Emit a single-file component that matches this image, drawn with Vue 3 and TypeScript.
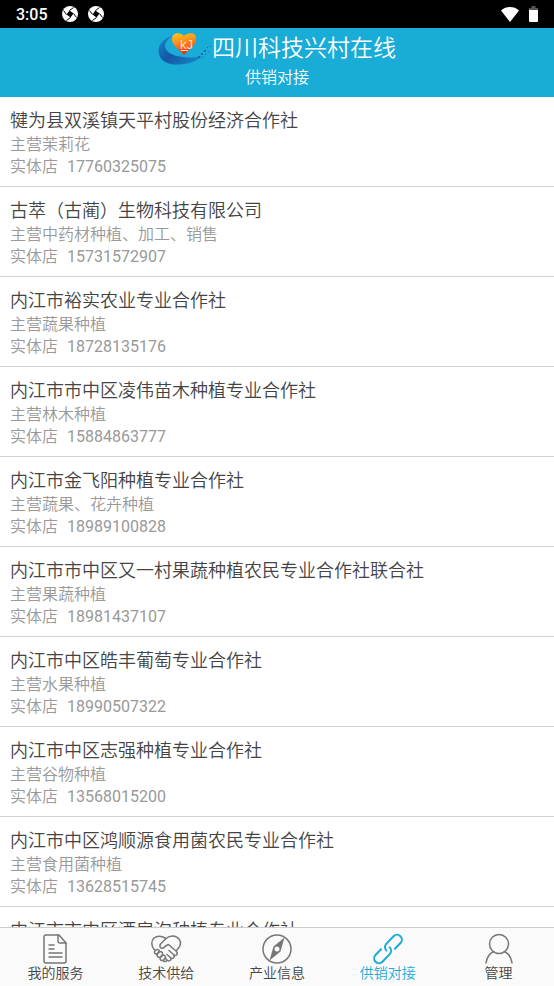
<script setup lang="ts">
import { ref } from 'vue'

interface Supplier {
  name: string
  business: string
  kind: string
  phone: string
}

interface Tab {
  id: string
  label: string
}

const suppliers: Supplier[] = [
  { name: '犍为县双溪镇天平村股份经济合作社', business: '主营茉莉花', kind: '实体店', phone: '17760325075' },
  { name: '古萃（古蔺）生物科技有限公司', business: '主营中药材种植、加工、销售', kind: '实体店', phone: '15731572907' },
  { name: '内江市裕实农业专业合作社', business: '主营蔬果种植', kind: '实体店', phone: '18728135176' },
  { name: '内江市市中区凌伟苗木种植专业合作社', business: '主营林木种植', kind: '实体店', phone: '15884863777' },
  { name: '内江市金飞阳种植专业合作社', business: '主营蔬果、花卉种植', kind: '实体店', phone: '18989100828' },
  { name: '内江市市中区又一村果蔬种植农民专业合作社联合社', business: '主营果蔬种植', kind: '实体店', phone: '18981437107' },
  { name: '内江市中区皓丰葡萄专业合作社', business: '主营水果种植', kind: '实体店', phone: '18990507322' },
  { name: '内江市中区志强种植专业合作社', business: '主营谷物种植', kind: '实体店', phone: '13568015200' },
  { name: '内江市中区鸿顺源食用菌农民专业合作社', business: '主营食用菌种植', kind: '实体店', phone: '13628515745' },
  { name: '内江市市中区酒房沟种植专业合作社', business: '', kind: '', phone: '' },
]

const tabs: Tab[] = [
  { id: 'service', label: '我的服务' },
  { id: 'tech', label: '技术供给' },
  { id: 'info', label: '产业信息' },
  { id: 'trade', label: '供销对接' },
  { id: 'manage', label: '管理' },
]

const active = ref('trade')
</script>

<template>
  <div class="screen">
    <div class="status">
      <span class="clock">3:05</span>
      <svg v-for="n in 2" :key="n" class="notice" viewBox="0 0 16 16" aria-hidden="true">
        <circle cx="8" cy="8" r="8" fill="#fff" />
        <path d="M7.500 4.500 11.500 7.500 8.500 11.500 4.500 8.500Z" fill="#000" />
        <path d="M7.500 4.500 11.500 1.500M11.500 7.500 14.500 11.500M8.500 11.500 4.500 14.500M4.500 8.500 1.500 4.500" fill="none" stroke="#000" stroke-width="1" />
      </svg>
      <span class="spacer"></span>
      <svg class="wifi" viewBox="0 0 18 15" aria-hidden="true">
        <path d="M0 3.500C5-1.100 13-1.100 18 3.500L9 15Z" fill="#fff" />
      </svg>
      <svg class="battery" viewBox="0 0 9 16" aria-hidden="true">
        <path d="M2.500 0h4v2H9v2H0V2h2.500Z" fill="#555" />
        <path d="M0 4h9v11q0 1-1 1H1q-1 0-1-1Z" fill="#fff" />
      </svg>
    </div>

    <header class="header">
      <div class="brand">
        <svg class="logo" viewBox="0 0 54 36" aria-hidden="true">
          <defs>
            <linearGradient id="heart" x1="0" y1="0" x2="0.300" y2="1">
              <stop offset="0" stop-color="#ffc81a" />
              <stop offset="0.500" stop-color="#ff8a1c" />
              <stop offset="1" stop-color="#f02c12" />
            </linearGradient>
            <linearGradient id="swoosh" x1="0" y1="0" x2="1" y2="0.800">
              <stop offset="0" stop-color="#1789c9" />
              <stop offset="0.500" stop-color="#1556a6" />
              <stop offset="1" stop-color="#1685c6" />
            </linearGradient>
          </defs>
          <path d="M14 4C4 7-1 15 1 22 3 31 14 34 26 32 34 31 40 28 44 24 37 26 31 26 25 25 14 24 7 20 7 13 8 9 11 6 14 4Z" fill="url(#swoosh)" />
          <path d="M26 23C22 18 14 14 14 7 14 0 23 0 26 4 30 0 39 0 38 7 38 14 30 18 26 23Z" fill="url(#heart)" />
          <text x="22" y="17" class="monogram">kJ</text>
          <path d="M23 18.500h7" stroke="#ffe3cc" stroke-width="1" />
          <path d="M40 24h2v2h-2zM43 21h2v2h-2zM44 25h1v1h-1zM46 18h2v2h-2zM47 22h1v1h-1zM49 15h1v1h-1zM50 19h1v1h-1zM52 14h1v1h-1z" fill="#1766b0" />
        </svg>
        <h1 class="title">四川科技兴村在线</h1>
      </div>
      <h2 class="subtitle">供销对接</h2>
    </header>

    <main class="list">
      <article v-for="item in suppliers" :key="item.name" class="row">
        <h3 class="name">{{ item.name }}</h3>
        <p class="detail">{{ item.business }}</p>
        <p class="detail contact"><span>{{ item.kind }}</span><span class="phone">{{ item.phone }}</span></p>
      </article>
    </main>

    <nav class="tabs">
      <button v-for="tab in tabs" :key="tab.id" type="button" class="tab" :class="{ active: tab.id === active }" @click="active = tab.id">
        <svg class="icon" viewBox="0 0 32 32" aria-hidden="true">
          <template v-if="tab.id === 'service'">
            <path d="M7 2h13l7 8v18q0 2-2 2H7q-2 0-2-2V4q0-2 2-2Z" />
            <path d="M19 2v6q0 2 2 2h6M10 12h5M10 16h5M10 20h13M10 24h13" />
          </template>
          <template v-else-if="tab.id === 'tech'">
            <path d="M4.500 17C1 13 1 8 4 5 8 2 12 3 16 5.500 20 2 26 2 29 6 32 10 30 14 26.500 17.500" />
            <path d="M16 5.500 10.500 11q-1.500 2.500.500 4 2.500 1 4.500-2l3-1.500 8 7q1.500 2 0 3.500-1.500 1-3-.500l-4.500-4M23.500 21.500q1.500 2 0 3.500-1.500 1-3-.500l-3.500-3M20.500 24.500q1 2-.500 3-1.500 1-3-.500l-2-2M17 27q-1 2.500-3.500 1" />
            <path d="M4.500 18.500l2-2q2-.500 3 1.500l-2.500 3q-3 0-2.500-2.500ZM7 21.500l3-3q3 0 2.500 3L10 24.500q-3 0-3-3ZM10 25l3-3q3 .500 2.500 3L13 27.500q-3 .500-3-2.500Z" />
          </template>
          <template v-else-if="tab.id === 'info'">
            <circle cx="16" cy="16" r="14" />
            <path class="solid" fill-rule="evenodd" d="M23.500 4.500 19.500 18.500 8.500 27.500 12.500 13.500ZM16 13.500a2.500 2.500 0 1 0 0 5 2.500 2.500 0 1 0 0-5Z" />
          </template>
          <g v-else-if="tab.id === 'trade'" class="link" transform="translate(16 16) rotate(-46)">
            <path d="M5 4.800H13A4.800 4.800 0 0 0 13-4.800H2.500A4.800 4.800 0 0 0-2.300 0" />
            <path d="M-5-4.800H-13A4.800 4.800 0 0 0-13 4.800H-2.500A4.800 4.800 0 0 0 2.300 0" />
          </g>
          <template v-else>
            <circle cx="16" cy="11" r="9.500" />
            <path d="M3 30C4 24 7 20 11 18.500M29 30C28 24 25 20 21 18.500" />
          </template>
        </svg>
        <span>{{ tab.label }}</span>
      </button>
    </nav>
  </div>
</template>

<style>
body {
  margin: 0;
}
</style>

<style scoped>
.screen {
  display: flex;
  flex-direction: column;
  height: 100vh;
  background: #fff;
  color: #444;
  font-family: Roboto, "Noto Sans CJK SC", sans-serif;
  font-weight: 350;
}

.status {
  display: flex;
  align-items: center;
  gap: 10px;
  height: 28px;
  padding: 0 16px;
  background: #000;
  color: #fff;
  flex: none;
}

.clock {
  font-size: 16px;
  font-weight: 500;
  margin-right: 4px;
}

.notice {
  width: 16px;
  height: 16px;
}

.spacer {
  flex: 1;
}

.wifi {
  width: 18px;
  height: 15px;
}

.battery {
  width: 9px;
  height: 16px;
}

.header {
  flex: none;
  padding-bottom: 8px;
  background: #19acd7;
  color: #fff;
  text-align: center;
}

.brand {
  display: flex;
  justify-content: center;
  height: 38px;
}

.logo {
  width: 54px;
  height: 36px;
  margin-top: 4px;
}

.monogram {
  fill: #ffe3cc;
  font-family: "Liberation Sans", sans-serif;
  font-size: 13px;
}

.title {
  margin: 0;
  font-size: 23px;
  font-weight: 350;
  line-height: 42px;
}

.subtitle {
  margin: 0;
  font-size: 16px;
  font-weight: 350;
  line-height: 23px;
}

.list {
  flex: 1;
  min-height: 0;
  overflow: hidden;
}

.row {
  padding: 11px 10px 8px;
  border-bottom: 1px solid #d4d4d4;
}

.name {
  margin: 0;
  font-size: 18px;
  font-weight: 350;
  line-height: 26px;
}

.detail {
  margin: 0;
  color: #999;
  font-size: 16px;
  line-height: 22px;
}

.contact {
  display: flex;
  gap: 9px;
}

.phone {
  font-weight: 400;
}

.tabs {
  display: flex;
  flex: none;
  height: 59px;
  box-sizing: border-box;
  border-top: 1px solid #ccc;
  background: #fafafa;
}

.tab {
  display: flex;
  flex: 1;
  flex-direction: column;
  align-items: center;
  padding: 5px 0 0;
  border: 0;
  background: none;
  color: #444;
  font-family: inherit;
  font-size: 14px;
  font-weight: 350;
  line-height: 16px;
}

.icon {
  width: 32px;
  height: 32px;
  fill: none;
  stroke: #777;
  stroke-width: 1.5;
  stroke-linecap: round;
  stroke-linejoin: round;
}

.solid {
  fill: #777;
  stroke: none;
}

.link {
  stroke-width: 2;
}

.active {
  color: #19acd7;
}

.active .icon {
  stroke: #19acd7;
}
</style>
